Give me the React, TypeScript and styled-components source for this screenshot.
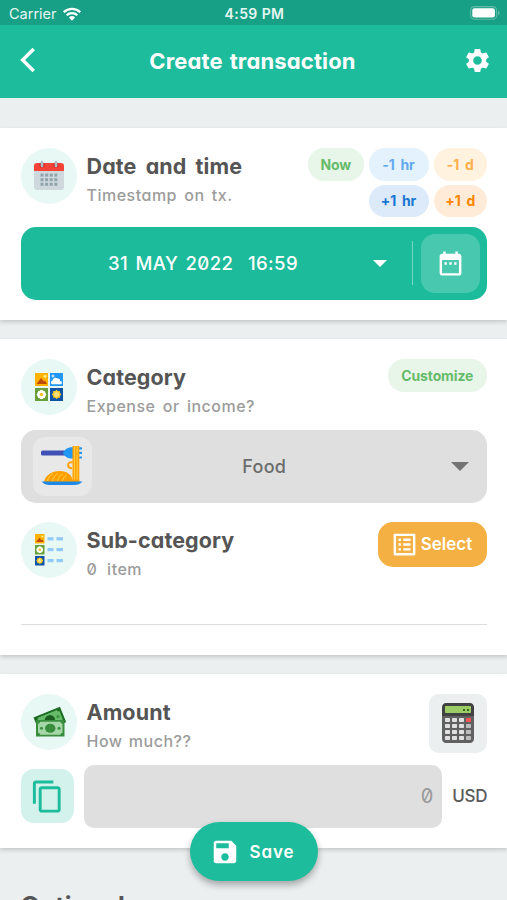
import React from 'react';
import styled, { createGlobalStyle } from 'styled-components';
import { FcCalculator } from 'react-icons/fc';
import { MdSettings, MdDateRange, MdSave, MdContentCopy, MdListAlt } from 'react-icons/md';

const Global = createGlobalStyle`
  * { box-sizing: border-box; }
  html, body { margin: 0; height: 900px; overflow: hidden; }
  body {
    background: #ebeff0;
    font-family: Inter, "Open Sans", sans-serif;
    font-feature-settings: "cv11", "zero";
    color: #555;
  }
  svg { display: block; flex: none; }
`;

const Screen = styled.div`
  width: 507px; height: 900px; overflow: hidden; position: relative;
  display: flex; flex-direction: column; background: #ebeff0;
`;
const StatusBar = styled.div`
  height: 25px; flex: none; background: #18a086; color: #e4f6f2;
  display: grid; grid-template-columns: 1fr auto 1fr; align-items: center;
  padding: 2px 7px 0 9px; font: 400 14.5px/20px Inter, sans-serif;
`;
const Carrier = styled.div`display: flex; align-items: center; gap: 6px;`;
const Clock = styled.div`font-weight: 600; font-size: 14px; letter-spacing: 0.4px;`;
const Battery = styled.div`justify-self: end; margin-top: -2px;`;
const Header = styled.header`
  height: 73px; flex: none; background: #1dbc9c; color: #fff;
  display: flex; align-items: center; justify-content: space-between; padding: 0 15px 3px 20px;
`;
const Heading = styled.h1`
  margin: 0; font-size: 22px; font-weight: 700; line-height: 30px; letter-spacing: 0.15px;
  word-spacing: 1.5px; padding: 1px 0 0 6px;
`;
const Card = styled.section<{ $h: number; $mt: number }>`
  height: ${p => p.$h}px; margin-top: ${p => p.$mt}px; flex: none;
  background: #fff; padding: 20px 20px 0 20.5px;
  box-shadow: 0 2px 4px rgba(0,0,0,.17);
`;
const Row = styled.div<{ $mt?: number }>`
  display: flex; align-items: flex-start; gap: 10px; margin-top: ${p => p.$mt ?? 0}px;
`;
const Disc = styled.div`
  width: 56px; height: 56px; flex: none; border-radius: 50%; background: #e8f8f5;
  display: flex; align-items: center; justify-content: center;
`;
const Titles = styled.div`flex: 1; padding-top: 2px; white-space: pre;`;
const Title = styled.h2`
  margin: 0; font-size: 21.5px; line-height: 32px; font-weight: 700; color: #555;
  letter-spacing: 0.1px; word-spacing: 4px;
`;
const Sub = styled.div<{ $ws?: number }>`
  font-size: 16px; line-height: 26px; font-weight: 500; color: #9c9c9c;
  letter-spacing: 0.5px; word-spacing: ${p => p.$ws ?? 2.5}px;
`;
const Pills = styled.div`
  display: grid; grid-template-columns: 55.5px 60px 53.5px; gap: 4px 5px; grid-auto-rows: 32.5px;
  margin-left: -60px;
`;
const Pill = styled.button<{ $bg: string; $fg: string; $col?: number; $w?: number }>`
  border: 0; padding: 0; height: 32.5px; border-radius: 16px; font: inherit; font-size: 14px; font-weight: 700;
  background: ${p => p.$bg}; color: ${p => p.$fg}; grid-column: ${p => p.$col ?? 'auto'};
  width: ${p => (p.$w ? p.$w + 'px' : '100%')}; letter-spacing: -0.1px; word-spacing: 2.5px;
`;
const DateBar = styled.div`
  height: 73px; margin-top: 9.5px; border-radius: 15px; background: #1cbb9b; color: #fff;
  display: flex; align-items: center; padding-right: 7.5px;
`;
const DateText = styled.div`
  flex: 1; text-align: center; font-size: 18.5px; font-weight: 500; white-space: pre; padding-left: 13px;
  letter-spacing: 0.4px; word-spacing: 2px;
`;
const Caret = styled.div<{ $w: number; $c: string }>`
  border: ${p => p.$w / 2}px solid transparent; border-top: ${p => p.$w * 0.54}px solid ${p => p.$c};
  border-bottom: 0; flex: none;
`;
const Divider = styled.div`width: 1.5px; height: 44px; background: #74d6c2; margin: 0 7.5px 0 25px;`;
const Tile = styled.div<{ $s: number; $bg: string; $r: number }>`
  width: ${p => p.$s}px; height: ${p => p.$s}px; border-radius: ${p => p.$r}px; background: ${p => p.$bg};
  display: flex; align-items: center; justify-content: center; flex: none;
`;
const CategoryBar = styled.div`
  height: 73px; margin-top: 10.5px; border-radius: 15px; background: #dfdfdf; color: #6b6b6b;
  display: flex; align-items: center; padding: 0 18px 0 12px;
`;
const CategoryName = styled.div`
  flex: 1; text-align: center; font-size: 18px; font-weight: 500; letter-spacing: 0.3px; padding-right: 14px;
`;
const SelectButton = styled.button`
  width: 109px; height: 44.5px; border: 0; border-radius: 15px; background: #f4b042; color: #fff;
  display: flex; align-items: center; justify-content: center; gap: 2px;
  font: inherit; font-size: 17px; font-weight: 600; padding: 0 3px 0 0;
`;
const Line = styled.div`height: 1px; background: #dcdddd; margin-top: 41.5px;`;
const AmountField = styled.div`
  width: 359px; height: 63px; border-radius: 10px; background: #dfdfdf; color: #999;
  display: flex; align-items: center; justify-content: flex-end; padding-right: 9px; font-size: 20px;
`;
const Currency = styled.div`font-size: 17px; font-weight: 500; color: #5a5a5a; letter-spacing: -0.4px;`;
const AmountRow = styled.div`display: flex; align-items: center; gap: 10px; margin-top: 10.5px;`;
const NextTitle = styled.h2`
  margin: 42px 0 0 20.5px; font-size: 25px; line-height: 32px; font-weight: 700; color: #555;
`;
const Save = styled.button`
  position: absolute; left: 190px; top: 822px; width: 128px; height: 59px; border: 0; border-radius: 30px;
  background: #1dbc9c; color: #fff; display: flex; align-items: center; justify-content: center; gap: 10px;
  font: inherit; font-size: 17px; font-weight: 600; letter-spacing: .9px; padding: 0 4px 0 0;
  box-shadow: 0 4px 7px rgba(0,0,0,.3);
`;

const Wifi = () => (
  <svg width="18" height="14" viewBox="0 0 18 14" fill="none" stroke="#fff" strokeWidth="2.3">
    <path d="M.8 5.2a11.7 11.7 0 0 1 16.4 0" />
    <path d="M3.7 8.3a7.6 7.6 0 0 1 10.6 0" />
    <path d="M9 13.7 5.9 10.5a4.5 4.5 0 0 1 6.2 0z" fill="#fff" stroke="none" />
  </svg>
);
const BatteryIcon = () => (
  <svg width="30" height="14" viewBox="0 0 30 14">
    <rect x=".6" y=".6" width="26" height="12.6" rx="3.8" fill="none" stroke="#62b9a8" strokeWidth="1.1" />
    <rect x="2.3" y="2.3" width="22.6" height="9.2" rx="2.2" fill="#fff" />
    <path d="M28 5v4c1.2-.4 1.700-1 1.700-2s-.5-1.600-1.700-2z" fill="#62b9a8" />
  </svg>
);
const Back = () => (
  <svg width="16" height="26" viewBox="0 0 16 26" fill="none" stroke="#fff" strokeWidth="3.4">
    <path d="M13.7 2 2.6 13l11.1 11" />
  </svg>
);
const Calendar = () => (
  <svg width="32" height="32" viewBox="0 0 32 32">
    <path d="M1 11h30v16a3 3 0 0 1-3 3H4a3 3 0 0 1-3-3z" fill="#cfd8dc" />
    <path d="M4 3h24a3 3 0 0 1 3 3v5H1V6a3 3 0 0 1 3-3z" fill="#f44336" />
    <circle cx="9" cy="5" r="2.6" fill="#c62828" /><circle cx="23" cy="5" r="2.6" fill="#c62828" />
    <path d="M9 2v4M23 2v4" stroke="#b0bec5" strokeWidth="2.6" strokeLinecap="round" />
    {[14, 18.6, 23.2].map(y => [7.5, 12.1, 16.7, 21.3].map(x => (
      <rect key={x + '-' + y} x={x} y={y - 0.4} width="3" height="3" fill="#90a4ae" />
    )))}
  </svg>
);
const Mountain = () => (
  <>
    <rect width="13" height="13" fill="#ffb300" />
    <path d="M1.5 11 6 5l3 3.5 1-1 2 3.5z" fill="#bf4a0c" /><circle cx="10" cy="3.3" r="1.4" fill="#fff59d" />
  </>
);
const Flower = () => (
  <>
    <rect width="13" height="13" fill="#689f38" />
    <g fill="#fff">
      <circle cx="6.5" cy="3.8" r="2" /><circle cx="6.5" cy="9.2" r="2" />
      <circle cx="3.8" cy="6.5" r="2" /><circle cx="9.2" cy="6.5" r="2" />
      <circle cx="4.6" cy="4.6" r="1.9" /><circle cx="8.4" cy="4.6" r="1.9" />
      <circle cx="4.6" cy="8.4" r="1.9" /><circle cx="8.4" cy="8.4" r="1.9" />
    </g>
    <circle cx="6.5" cy="6.5" r="1.8" fill="#fbc02d" />
  </>
);
const Sun = () => (
  <>
    <rect width="13" height="13" fill="#0d52a5" />
    <path d="m6.5 1.8 1.4 1.3 1.9-.1.2 1.9 1.4 1.4-1.3 1.4-.1 2-1.9.1-1.5 1.3-1.4-1.3-2-.1-.1-1.9L1.7 6.4l1.4-1.5.1-1.9 1.9.1z" fill="#ffca28" />
    <circle cx="6.5" cy="6.5" r="2.4" fill="#ffe082" />
  </>
);
const Gallery = () => (
  <svg width="28" height="28" viewBox="0 0 28 28">
    <Mountain />
    <g transform="translate(15)">
      <rect width="13" height="13" fill="#2196f3" />
      <path d="M2 11.3a2 2 0 0 1 .5-3.7 3 3 0 0 1 5-2 2.3 2.3 0 0 1 2.6 2.3 1.8 1.8 0 0 1 .9 3.4z" fill="#fff" />
      <circle cx="3" cy="3" r="1.5" fill="#bbdefb" />
    </g>
    <g transform="translate(0 15)"><Flower /></g>
    <g transform="translate(15 15)"><Sun /></g>
  </svg>
);
const SubList = () => (
  <svg width="28" height="32" viewBox="0 0 28 32">
    <g transform="scale(.73)"><Mountain /></g>
    <g transform="translate(0 11) scale(.73)"><Flower /></g>
    <g transform="translate(0 22) scale(.73)"><Sun /></g>
    {[3.2, 14, 25].map(y => (
      <g key={y} fill="#90caf9"><rect x="12.5" y={y} width="6" height="3.2" /><rect x="21.5" y={y} width="6.5" height="3.2" /></g>
    ))}
  </svg>
);
const Noodles = () => (
  <svg width="42" height="42" viewBox="0 0 42 42">
    <rect x="0" y="5.5" width="26" height="5" rx="1.5" fill="#3f51b5" />
    <path d="M22 8c1.500-3.500 4.500-5.800 9-5.800h10v2.200h-5v2.400h5v2.200h-5v2.400h5v2.200H31c-4.500 0-7.500-2.200-9-5.600z" fill="#2196f3" />
    <rect x="31.500" y="1" width="6.800" height="36" fill="#ffa000" />
    <path d="M33.600 1v35M36.100 1v35" stroke="#ffd54f" strokeWidth=".9" />
    <path d="M3 37c1-6.500 8-11 16-11 6.500 0 11.500 3.500 12.500 8.500h6.800V37z" fill="#ffa000" />
    <path d="M6.500 36c1-4 3-6 5.500-7.500M11.500 36c1-4 3-6 5.500-7.500M16.500 36c1-4 3-6 5.500-7M21.500 36c.8-3 2-4.500 4-6" fill="none" stroke="#ffd54f" strokeWidth=".9" />
    <path d="M31.500 17.500c-5.500-1.500-6 5.800-.5 5.800" fill="none" stroke="#ffa000" strokeWidth="2" />
    <path d="M.5 36.500h41c-2 2.400-5 3.600-8 3.600h-25c-3 0-6-1.200-8-3.600z" fill="#1e88e5" />
  </svg>
);
const Bill = ({ dark }: { dark?: boolean }) => (
  <>
    <rect width="28.500" height="16.500" fill={dark ? '#1b6b22' : '#388e3c'} />
    <path d="M4 1.800h20.500a2 2 0 0 0 2 2v9a2 2 0 0 0-2 2H4a2 2 0 0 0-2-2v-9a2 2 0 0 0 2-2z" fill={dark ? '#66bb6a' : '#a5d6a7'} />
    <ellipse cx="14.250" cy="8.250" rx="5.200" ry="4.600" fill={dark ? '#1b5e20' : '#388e3c'} />
    <circle cx="5.500" cy="8.250" r="1.500" fill="#388e3c" /><circle cx="23" cy="8.250" r="1.500" fill="#388e3c" />
  </>
);
const Money = () => (
  <svg width="34" height="32" viewBox="0 0 34 32">
    <g transform="translate(1.500 11.500) rotate(-22)"><Bill dark /></g>
    <g transform="translate(4 14)"><Bill /></g>
  </svg>
);

export default function App() {
  return (
    <>
      <Global />
      <Screen>
        <StatusBar>
          <Carrier>Carrier <Wifi /></Carrier>
          <Clock>4:59 PM</Clock>
          <Battery><BatteryIcon /></Battery>
        </StatusBar>
        <Header>
          <Back />
          <Heading>Create transaction</Heading>
          <MdSettings size={29} />
        </Header>
        <Card $h={192} $mt={30}>
          <Row>
            <Disc><Calendar /></Disc>
            <Titles>
              <Title>Date and time</Title>
              <Sub>Timestamp on tx.</Sub>
            </Titles>
            <Pills>
              <Pill $bg="#e8f5e9" $fg="#66bb6a">Now</Pill>
              <Pill $bg="#e3f2fd" $fg="#64a9ee">-1 hr</Pill>
              <Pill $bg="#fff3e0" $fg="#ffb04c">-1 d</Pill>
              <Pill $bg="#dceafa" $fg="#1976d2" $col={2}>+1 hr</Pill>
              <Pill $bg="#ffebd7" $fg="#f98600" $col={3}>+1 d</Pill>
            </Pills>
          </Row>
          <DateBar>
            <DateText>31 MAY 2022  16:59</DateText>
            <Caret $w={14} $c="#fff" />
            <Divider />
            <Tile $s={59} $bg="#48c9af" $r={14}><MdDateRange size={29} /></Tile>
          </DateBar>
        </Card>
        <Card $h={316} $mt={19}>
          <Row>
            <Disc><Gallery /></Disc>
            <Titles>
              <Title>Category</Title>
              <Sub>Expense or income?</Sub>
            </Titles>
            <Pill $bg="#e8f5e9" $fg="#66bb6a" $w={99.5}>Customize</Pill>
          </Row>
          <CategoryBar>
            <Tile $s={59} $bg="#e8e8e8" $r={12}><Noodles /></Tile>
            <CategoryName>Food</CategoryName>
            <Caret $w={18} $c="#747474" />
          </CategoryBar>
          <Row $mt={19.5}>
            <Disc><SubList /></Disc>
            <Titles>
              <Title>Sub-category</Title>
              <Sub $ws={5}>0 item</Sub>
            </Titles>
            <SelectButton><MdListAlt size={29} />Select</SelectButton>
          </Row>
          <Line />
        </Card>
        <Card $h={174} $mt={19}>
          <Row>
            <Disc><Money /></Disc>
            <Titles>
              <Title>Amount</Title>
              <Sub $ws={1.5}>How much??</Sub>
            </Titles>
            <Tile $s={58.5} $bg="#ebeff0" $r={10}><FcCalculator size={48} /></Tile>
          </Row>
          <AmountRow>
            <Tile $s={53.5} $bg="#d2f2eb" $r={13}><MdContentCopy size={35} color="#1dbc9c" /></Tile>
            <AmountField>0</AmountField>
            <Currency>USD</Currency>
          </AmountRow>
        </Card>
        <NextTitle>Optional</NextTitle>
        <Save><MdSave size={30} />Save</Save>
      </Screen>
    </>
  );
}
